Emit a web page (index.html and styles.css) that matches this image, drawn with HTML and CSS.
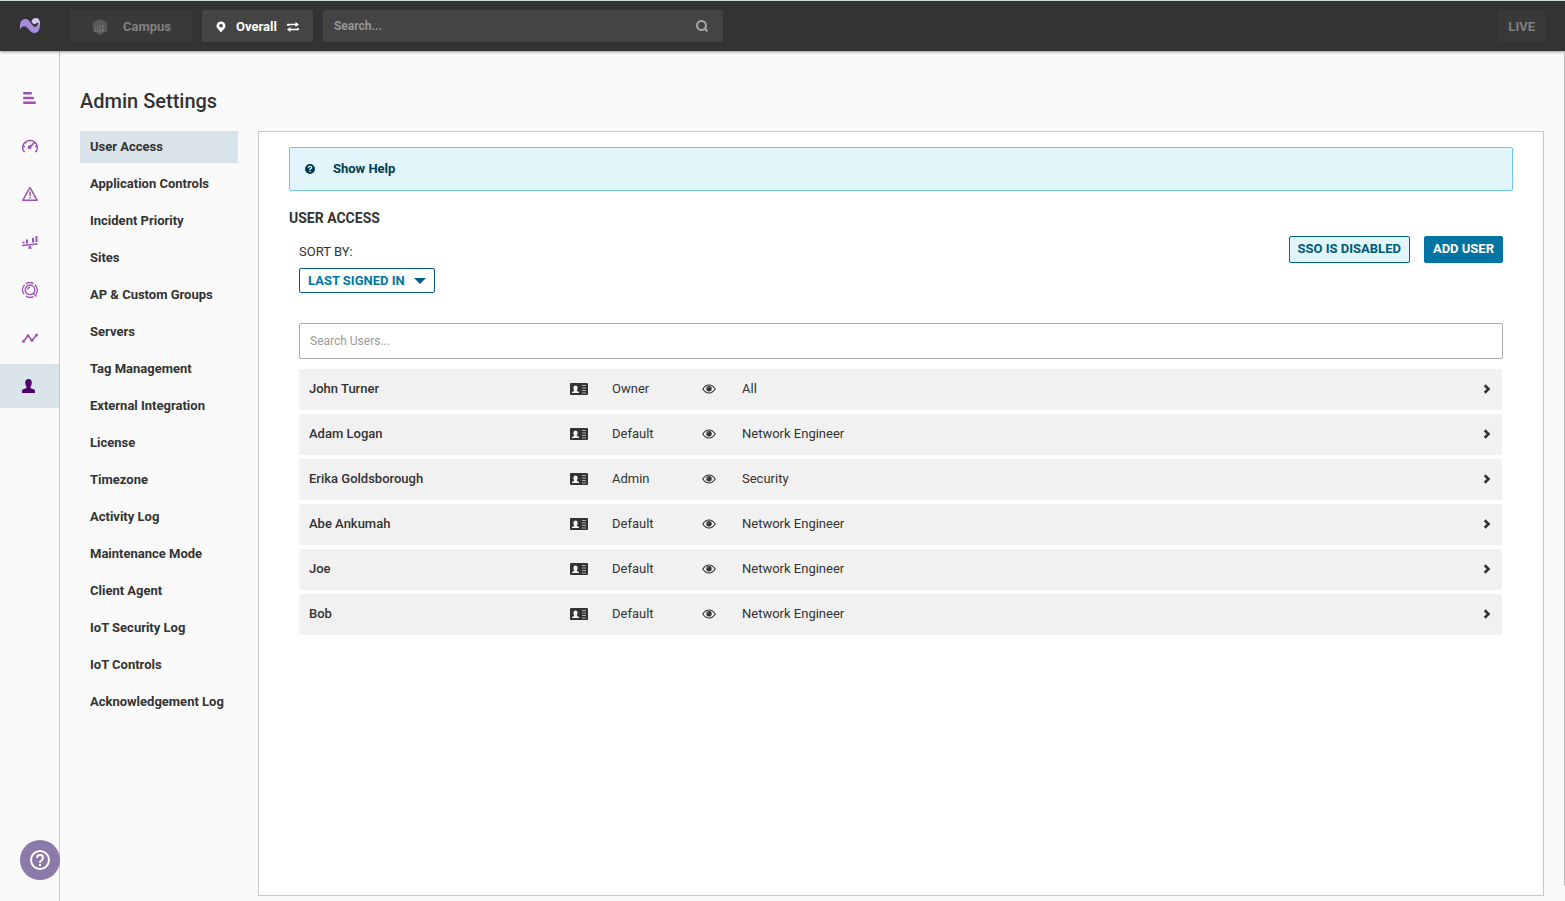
FILE: index.html
```html
<!DOCTYPE html>
<html lang="en">
<head>
<meta charset="utf-8">
<meta name="viewport" content="width=device-width, initial-scale=1">
<title>Admin Settings</title>
<link rel="stylesheet" href="styles.css">
</head>
<body>
<svg class="sprite" aria-hidden="true">
  <symbol id="card" viewBox="0 0 18 12">
    <rect width="18" height="12" rx="1" fill="#333"/>
    <path d="M2 10V9l2-1V7q-.8-1-.6-2.600Q3.600 2.500 5.500 2.500t2.100 1.900Q7.800 6 7 7v1l2 1v1z" fill="#f1f1f1"/>
    <path d="M12 2.500h4M12 5h4M12 7.500h4M12 10h4" stroke="#aaa" stroke-width="1"/>
  </symbol>
  <symbol id="eye" viewBox="0 0 14 10">
    <path d="M.8 5Q3.400 1 7 1t6.200 4Q10.600 9 7 9T.8 5z" fill="none" stroke="#333" stroke-width="1.200"/>
    <circle cx="7" cy="4.800" r="2.700" fill="#333"/>
    <path d="M5.500 4.600Q5.600 3.400 6.800 3.300" fill="none" stroke="#aaa" stroke-width=".6"/>
  </symbol>
  <symbol id="chevron" viewBox="0 0 8 10">
    <path d="M1.700 1.300 5.500 5 1.700 8.700" fill="none" stroke="#333" stroke-width="2.600"/>
  </symbol>
</svg>

<header class="topbar">
  <a class="logo" href="#" aria-label="Home">
    <svg width="20" height="16" viewBox="0 0 20 16">
      <path d="M0 11V7.500C0 3.500 2.300 1 5.500 1 10.500 1 11.500 8.800 15 8.800c1.800 0 2.800-1.300 2.900-3.300L20 6.500C20 12 18 15 14.500 15 9.500 15 8 8.300 4.300 8.300 2 8.300 1.200 9.500.4 11.500z" fill="#a98bdc"/>
      <path d="M11.500 3C12.300 1 14 0 15.800 0 18.500 0 20 2 20 5v3.500c-.5-2.200-1.200-3.700-2.700-3.700-1.200 0-1.500 1.400-2.600 1.400-1.500 0-2.700-1.400-3.200-3.200z" fill="#d6c8ee"/>
    </svg>
  </a>
  <button class="top-button campus" type="button" disabled>
    <svg width="16" height="16" viewBox="0 0 16 16">
      <path d="M8 0l7 3.500v8.500L8 16 1 12V3.500z" fill="#585858"/>
      <path d="M3 8h3V6h6v7H3z" fill="#747474"/>
      <path d="M6.500 6v7M9 6v7M3 10h9M4.500 8v5M7 8h5" stroke="#555" stroke-width=".8"/>
    </svg>
    <span>Campus</span>
  </button>
  <button class="top-button overall" type="button">
    <svg width="10" height="12" viewBox="0 0 10 12">
      <path fill-rule="evenodd" d="M5 .5a4.500 4.500 0 0 1 4.500 4.500c0 2.600-3 4.200-4.500 6.500C3.500 9.200.5 7.600.5 5A4.500 4.500 0 0 1 5 .5zM5 3a1.800 1.800 0 1 0 0 3.600A1.800 1.800 0 0 0 5 3z" fill="#fff"/>
    </svg>
    <span>Overall</span>
    <svg width="12" height="10" viewBox="0 0 12 10">
      <path d="M1 4V2.500h8M11 6v1.500H3" fill="none" stroke="#fff" stroke-width="1.700"/>
      <path d="M8.500 0 12 2.500 8.500 5zM3.500 5 0 7.500 3.500 10z" fill="#fff"/>
    </svg>
  </button>
  <form class="top-search" role="search">
    <input type="search" placeholder="Search..." aria-label="Search">
    <button type="button" aria-label="Submit search">
      <svg width="12" height="12" viewBox="0 0 12 12" fill="none" stroke="#a5a5a5" stroke-width="2">
        <circle cx="5.500" cy="5.500" r="4.500"/><path d="M8 8l3.400 3.400"/>
      </svg>
    </button>
  </form>
  <button class="top-button live" type="button">LIVE</button>
</header>

<div class="layout">
  <nav class="rail" aria-label="Main">
    <a href="#" aria-label="Summary"><svg width="16" height="16" viewBox="0 0 16 16" fill="none" stroke="#a04fb5" stroke-width="2.400" stroke-linecap="round"><path d="M2.200 3.200h6.600M2.200 8h8.600M2.200 12.800h10.600"/></svg></a>
    <a href="#" aria-label="Dashboard"><svg width="16" height="16" viewBox="0 0 16 16" fill="none" stroke="#a04fb5" stroke-width="1.400"><path d="M3 13.500H1.800A7.300 7.300 0 1 1 14.200 13.500H13M8 1.500v2M1 8.500h2M13 8.500h2M3.200 4l1.300 1.200"/><path d="M12.500 4.500 8 9" stroke-width="1.700"/><circle cx="7.600" cy="9.200" r="1.200" fill="#a04fb5"/></svg></a>
    <a href="#" aria-label="Incidents"><svg width="16" height="16" viewBox="0 0 16 16" fill="none" stroke="#a04fb5" stroke-width="1.500" stroke-linejoin="round"><path d="M8 1.500 15.200 14.300H.8z"/><path d="M8 5.500v4.500M8 11v1.500"/></svg></a>
    <a href="#" aria-label="Comparison"><svg width="16" height="16" viewBox="0 0 16 16" fill="#a04fb5"><path d="M.5 7.500h2v2h-2zM4 5.500h2v4H4zM10 4h2v4.500h-2zM13.500 2h2v6h-2zM7 12h1.500l1.500 2.800H6z"/><path d="M0 11.500 15.500 10" stroke="#a04fb5" stroke-width="1.400"/></svg></a>
    <a href="#" aria-label="Investigate"><svg width="16" height="16" viewBox="0 0 16 16" fill="none" stroke="#a04fb5" stroke-width="1.400"><circle cx="8" cy="7.800" r="4.800"/><path d="M5.500 7.500A2.800 2.800 0 0 1 8 5.200M11.300 11.200l3.200 3.300M2.500 3A7.300 7.300 0 0 0 2 12.200M3.800 1.900A7.300 7.300 0 0 1 11.500 1.500M13 2.700A7.300 7.300 0 0 1 14 12M4 14A7.300 7.300 0 0 0 11.500 14.600"/></svg></a>
    <a href="#" aria-label="Trends"><svg width="16" height="16" viewBox="0 0 16 16" fill="#a04fb5"><path d="M1.500 11.500 6 5.500l4 5L14.500 5" fill="none" stroke="#a04fb5" stroke-width="1.600"/><circle cx="1.500" cy="11.300" r="1.500"/><circle cx="6" cy="5.800" r="1.500"/><circle cx="10" cy="10.300" r="1.500"/><circle cx="14.500" cy="5" r="1.500"/></svg></a>
    <a class="active" href="#" aria-label="Admin" aria-current="page"><svg width="16" height="16" viewBox="0 0 16 16"><path d="M0 15v-2.200q.2-1.500 2.500-2 2.200-.4 2.200-1.600Q3.300 7.500 3.200 4.800 3.200 1 6.500 1t3.300 3.800Q9.700 7.500 8.300 9.200q0 1.200 2.200 1.600 2.300.5 2.500 2V15z" fill="#50006b"/></svg></a>
  </nav>

  <main class="content">
    <h1>Admin Settings</h1>
    <div class="columns">
      <nav class="settings-nav" aria-label="Admin settings">
        <a class="active" href="#" aria-current="page">User Access</a>
        <a href="#">Application Controls</a>
        <a href="#">Incident Priority</a>
        <a href="#">Sites</a>
        <a href="#">AP &amp; Custom Groups</a>
        <a href="#">Servers</a>
        <a href="#">Tag Management</a>
        <a href="#">External Integration</a>
        <a href="#">License</a>
        <a href="#">Timezone</a>
        <a href="#">Activity Log</a>
        <a href="#">Maintenance Mode</a>
        <a href="#">Client Agent</a>
        <a href="#">IoT Security Log</a>
        <a href="#">IoT Controls</a>
        <a href="#">Acknowledgement Log</a>
      </nav>

      <section class="panel">
        <button class="help-banner" type="button">
          <svg width="10" height="10" viewBox="0 0 10 10"><circle cx="5" cy="5" r="5" fill="#003c50"/><path d="M3.300 3.900Q3.400 2.300 5 2.300t1.700 1.300Q6.700 4.500 5 5.200V6" fill="none" stroke="#e1f5fb" stroke-width="1.300"/><path d="M4.300 6.700h1.400V8H4.300z" fill="#e1f5fb"/></svg>
          <span>Show Help</span>
        </button>
        <h2>USER ACCESS</h2>
        <div class="access">
          <div class="toolbar">
            <div class="sort">
              <label for="sort">SORT BY:</label>
              <div class="select">
                <select id="sort"><option>LAST SIGNED IN</option><option>NAME</option></select>
                <svg width="12" height="6" viewBox="0 0 12 6"><path d="M0 0h12L6 6z" fill="#005f82"/></svg>
              </div>
            </div>
            <div class="actions">
              <button class="button outline" type="button">SSO IS DISABLED</button>
              <button class="button solid" type="button">ADD USER</button>
            </div>
          </div>
          <input class="user-search" type="search" placeholder="Search Users..." aria-label="Search users">
          <ul class="users">
            <li><a href="#"><strong>John Turner</strong><svg width="18" height="12"><use href="#card"/></svg><span>Owner</span><svg width="14" height="10"><use href="#eye"/></svg><span>All</span><svg width="8" height="10"><use href="#chevron"/></svg></a></li>
            <li><a href="#"><strong>Adam Logan</strong><svg width="18" height="12"><use href="#card"/></svg><span>Default</span><svg width="14" height="10"><use href="#eye"/></svg><span>Network Engineer</span><svg width="8" height="10"><use href="#chevron"/></svg></a></li>
            <li><a href="#"><strong>Erika Goldsborough</strong><svg width="18" height="12"><use href="#card"/></svg><span>Admin</span><svg width="14" height="10"><use href="#eye"/></svg><span>Security</span><svg width="8" height="10"><use href="#chevron"/></svg></a></li>
            <li><a href="#"><strong>Abe Ankumah</strong><svg width="18" height="12"><use href="#card"/></svg><span>Default</span><svg width="14" height="10"><use href="#eye"/></svg><span>Network Engineer</span><svg width="8" height="10"><use href="#chevron"/></svg></a></li>
            <li><a href="#"><strong>Joe</strong><svg width="18" height="12"><use href="#card"/></svg><span>Default</span><svg width="14" height="10"><use href="#eye"/></svg><span>Network Engineer</span><svg width="8" height="10"><use href="#chevron"/></svg></a></li>
            <li><a href="#"><strong>Bob</strong><svg width="18" height="12"><use href="#card"/></svg><span>Default</span><svg width="14" height="10"><use href="#eye"/></svg><span>Network Engineer</span><svg width="8" height="10"><use href="#chevron"/></svg></a></li>
          </ul>
        </div>
      </section>
    </div>
  </main>
</div>

<button class="help-fab" type="button" aria-label="Help">
  <svg width="20" height="20" viewBox="0 0 20 20" fill="none" stroke="#fff" stroke-width="2"><circle cx="10" cy="10" r="9"/><path d="M7 8Q7 5 10 5t3 2.800Q13 9 11.500 10.200 10 11.300 10 13"/><path d="M10 14v2"/></svg>
</button>
</body>
</html>
```
FILE: styles.css
```css
* {
  box-sizing: border-box;
}

body {
  margin: 0;
  min-height: 100vh;
  display: flex;
  flex-direction: column;
  background: #fafafa;
  color: #333;
  font-family: Roboto, "Liberation Sans", sans-serif;
  font-size: 13px;
  line-height: 16px;
}

body::after {
  content: "";
  position: fixed;
  top: 51px;
  right: 0;
  bottom: 15px;
  width: 1px;
  background: #bbb;
}

button,
input,
select {
  font: inherit;
  color: inherit;
}

button {
  cursor: pointer;
}

a {
  color: inherit;
  text-decoration: none;
}

svg {
  display: block;
  flex: none;
}

.sprite {
  position: absolute;
  width: 0;
  height: 0;
}

.topbar {
  position: relative;
  display: flex;
  align-items: center;
  gap: 10px;
  padding: 9px 20px;
  border-top: 1px solid #d3dadd;
  background: #333;
  box-shadow: 0 1px 3px rgba(0, 0, 0, 0.4);
}

.logo {
  width: 40px;
}

.top-button {
  display: flex;
  align-items: center;
  height: 32px;
  border: 0;
  border-radius: 2px;
  background: #444;
  color: #fff;
  font-weight: 700;
}

.campus {
  gap: 15px;
  padding: 2px 21px 0 22px;
  background: #393939;
  color: #808080;
}

.overall {
  gap: 10px;
  padding: 2px 14px 0;
}

.top-search {
  display: flex;
  align-items: center;
  width: 400px;
  height: 32px;
  padding: 0 15px 0 11px;
  border-radius: 2px;
  background: #444;
}

.top-search input {
  flex: 1;
  min-width: 0;
  padding: 0;
  border: 0;
  outline: 0;
  background: none;
  color: #fff;
  font-size: 12px;
  font-weight: 700;
}

.top-search input::placeholder {
  color: #949494;
}

.top-search button {
  padding: 0;
  border: 0;
  background: none;
}

.live {
  margin-left: auto;
  padding: 2px 10px 0;
  background: #393939;
  color: #808080;
}

.layout {
  flex: 1;
  display: flex;
}

.rail {
  flex: none;
  display: flex;
  flex-direction: column;
  gap: 4px;
  width: 60px;
  padding-top: 25px;
  border-right: 1px solid #c8c8c8;
}

.rail a {
  display: flex;
  align-items: center;
  height: 44px;
  padding-left: 22px;
}

.rail .active,
.settings-nav .active {
  background: #d9e4ea;
}

.content {
  flex: 1;
  min-width: 0;
  display: flex;
  flex-direction: column;
  padding: 38px 21px 5px 20px;
}

h1 {
  margin: 0 0 18px;
  font-size: 20px;
  line-height: 24px;
  font-weight: 500;
}

.columns {
  flex: 1;
  display: flex;
  gap: 20px;
}

.settings-nav {
  flex: none;
  display: flex;
  flex-direction: column;
  gap: 5px;
  width: 158px;
  font-weight: 700;
}

.settings-nav a {
  padding: 8px 10px;
  white-space: nowrap;
}

.panel {
  flex: 1;
  min-width: 0;
  padding: 15px 30px;
  border: 1px solid #c8c8c8;
  background: #fff;
}

.help-banner {
  display: flex;
  align-items: center;
  gap: 18px;
  width: 100%;
  height: 44px;
  padding: 0 15px;
  border: 1px solid #71c8e2;
  border-radius: 2px;
  background: #e1f5fb;
  color: #003c50;
  font-weight: 700;
}

h2 {
  margin: 19px 0 17px;
  font-size: 14px;
  line-height: 16px;
  font-weight: 700;
}

.access {
  padding: 0 10px;
}

.toolbar {
  display: flex;
  justify-content: space-between;
  align-items: flex-start;
  margin-bottom: 30px;
}

.sort label {
  display: block;
  margin-bottom: 8px;
}

.sort {
  padding-top: 1px;
}

.select {
  display: flex;
  align-items: center;
  width: 136px;
  height: 25px;
  padding-right: 8px;
  border: 1px solid #005f82;
  border-radius: 2px;
}

.select select {
  flex: 1;
  min-width: 0;
  height: 23px;
  padding: 0 0 0 8px;
  border: 0;
  outline: 0;
  appearance: none;
  background: none;
  color: #0077a3;
  font-weight: 700;
}

.actions {
  display: flex;
  gap: 14px;
  margin-top: -7px;
}

.button {
  height: 27px;
  padding: 0 8px 2px;
  border: 1px solid #00658c;
  border-radius: 2px;
  font-weight: 700;
}

.outline {
  background: #e1f5fb;
  color: #005877;
}

.solid {
  border-color: #0074a2;
  background: #0074a2;
  color: #fff;
}

.user-search {
  display: block;
  width: 100%;
  height: 36px;
  padding: 0 10px;
  border: 1px solid #aaa;
  border-radius: 2px;
  background: #fff;
  font-size: 12px;
}

.user-search::placeholder {
  color: #999;
}

.users {
  display: flex;
  flex-direction: column;
  gap: 4px;
  margin: 10px 1px 0 0;
  padding: 0;
  list-style: none;
}

.users a {
  display: grid;
  grid-template-columns: 261px 42px 90px 40px 1fr auto;
  align-items: center;
  height: 41px;
  padding: 0 11px 1px 10px;
  border-radius: 2px;
  background: #f1f1f1;
}

.users strong {
  font-weight: 500;
}

.help-fab {
  position: fixed;
  left: 20px;
  bottom: 21px;
  display: grid;
  place-items: center;
  width: 40px;
  height: 40px;
  padding: 0;
  border: 0;
  border-radius: 50%;
  background: #8b79a9;
}
```
